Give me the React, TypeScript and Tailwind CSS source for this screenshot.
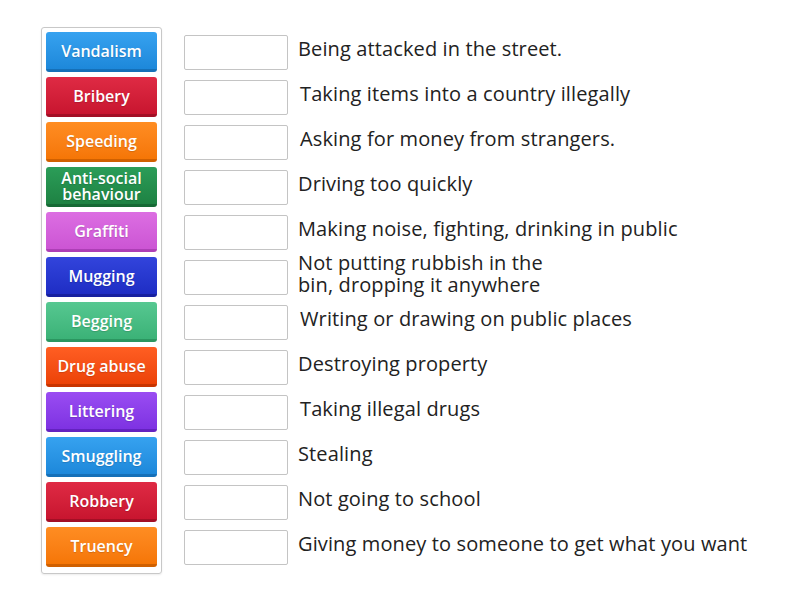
import React from "react";

type Tile = { label: string; cls: string };

const tiles: Tile[] = [
  { label: "Vandalism", cls: "bg-gradient-to-b from-[#36a2f0] to-[#1d88da] border-b-[#1570b8]" },
  { label: "Bribery", cls: "bg-gradient-to-b from-[#df2a44] to-[#c8152f] border-b-[#a30f25]" },
  { label: "Speeding", cls: "bg-gradient-to-b from-[#ff8d22] to-[#f57606] border-b-[#d06000]" },
  { label: "Anti-social behaviour", cls: "bg-gradient-to-b from-[#2b9d58] to-[#1e8243] border-b-[#166a35]" },
  { label: "Graffiti", cls: "bg-gradient-to-b from-[#dc6ee2] to-[#cc55d4] border-b-[#ad3fb6]" },
  { label: "Mugging", cls: "bg-gradient-to-b from-[#3244dc] to-[#1f2dc4] border-b-[#1720a0]" },
  { label: "Begging", cls: "bg-gradient-to-b from-[#56c891] to-[#3bb277] border-b-[#2b9660]" },
  { label: "Drug abuse", cls: "bg-gradient-to-b from-[#ff5e22] to-[#ec4206] border-b-[#c83400]" },
  { label: "Littering", cls: "bg-gradient-to-b from-[#9a4cf2] to-[#7e32e2] border-b-[#6422c0]" },
  { label: "Smuggling", cls: "bg-gradient-to-b from-[#36a2f0] to-[#1d88da] border-b-[#1570b8]" },
  { label: "Robbery", cls: "bg-gradient-to-b from-[#df2a44] to-[#c8152f] border-b-[#a30f25]" },
  { label: "Truency", cls: "bg-gradient-to-b from-[#ff8d22] to-[#f57606] border-b-[#d06000]" },
];

const defs: { text: string; shift?: boolean }[] = [
  { text: "Being attacked in the street." },
  { text: "Taking items into a country illegally", shift: true },
  { text: "Asking for money from strangers.", shift: true },
  { text: "Driving too quickly" },
  { text: "Making noise, fighting, drinking in public" },
  { text: "Not putting rubbish in the bin, dropping it anywhere" },
  { text: "Writing or drawing on public places", shift: true },
  { text: "Destroying property" },
  { text: "Taking illegal drugs", shift: true },
  { text: "Stealing" },
  { text: "Not going to school" },
  { text: "Giving money to someone to get what you want" },
];

export default function App() {
  return (
    <div
      className="w-[800px] h-[600px] bg-white flex items-start"
      style={{ fontFamily: '"Open Sans", "Noto Sans", sans-serif' }}
    >
      <div className="ml-[41px] mt-[27px] w-[121px] h-[547px] border border-[#c8c8c8] rounded-[3px] p-[4px] flex flex-col gap-[5px] shadow-[0_1px_2px_rgba(0,0,0,0.08)]">
        {tiles.map((t) => (
          <div
            key={t.label}
            className={`h-[40px] w-[111px] rounded-[3px] border-b-[3px] flex items-center justify-center text-center text-white font-semibold text-[16px] leading-[16px] px-1 ${t.cls}`}
            style={{ textShadow: "0 1px 1px rgba(0,0,0,0.15)" }}
          >
            {t.label}
          </div>
        ))}
      </div>
      <div className="ml-[22px] mt-[35px] flex flex-col gap-[10px]">
        {defs.map((d) => (
          <div key={d.text} className="flex items-center h-[35px]">
            <div className="w-[104px] h-[35px] border border-[#c4c4c4] rounded-[2px] bg-white shrink-0" />
            <div
              className={`${d.shift ? "ml-[12px]" : "ml-[10px]"} pb-[8px] text-[20px] tracking-[0.12px] leading-[22px] text-[#222]`}
            >
              {d.text.startsWith("Not putting") ? (
                <div className="flex flex-col">
                  <span className="whitespace-nowrap">Not putting rubbish in the</span>
                  <span className="whitespace-nowrap">bin, dropping it anywhere</span>
                </div>
              ) : (
                <span className="whitespace-nowrap">{d.text}</span>
              )}
            </div>
          </div>
        ))}
      </div>
    </div>
  );
}
